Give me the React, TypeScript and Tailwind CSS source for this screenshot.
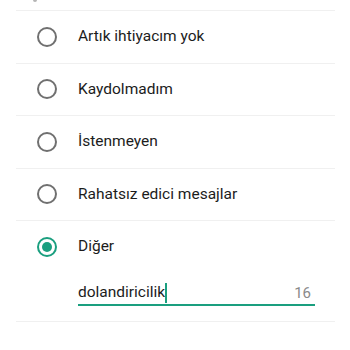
const options = [
  { label: "Artık ihtiyacım yok", checked: false },
  { label: "Kaydolmadım", checked: false },
  { label: "İstenmeyen", checked: false },
  { label: "Rahatsız edici mesajlar", checked: false },
]

function Radio({ checked }: { checked: boolean }) {
  if (checked) {
    return (
      <div className="w-[20px] h-[20px] rounded-full border-2 border-[#1a9f7f] flex items-center justify-center">
        <div className="w-[10px] h-[10px] rounded-full bg-[#1a9f7f]" />
      </div>
    )
  }
  return <div className="w-[20px] h-[20px] rounded-full border-2 border-[#707070]" />
}

export default function App() {
  return (
    <div
      className="w-[350px] h-[350px] bg-white overflow-hidden text-[#1c1c1c]"
      style={{ fontFamily: "Roboto, 'Noto Sans', sans-serif" }}
    >
      <div className="h-[10px] relative">
        <div className="absolute left-[33px] top-0 w-[4px] h-[2px] bg-[#b5b5b5] rounded-b-full" />
      </div>
      <div className="mx-4 w-[319px]">
        {options.map((o) => (
          <div key={o.label} className="border-t border-[#f0f0f0] h-[52.5px] flex items-center">
            <div className="ml-[21px]">
              <Radio checked={o.checked} />
            </div>
            <span className="ml-[21px] text-[15.5px] leading-none">{o.label}</span>
          </div>
        ))}
        <div className="border-t border-[#f0f0f0] border-b h-[102px] flex flex-col">
          <div className="h-[52px] flex items-center">
            <div className="ml-[21px]">
              <Radio checked />
            </div>
            <span className="ml-[21px] text-[15.5px] leading-none">Diğer</span>
          </div>
          <div className="mt-[9px] ml-[62px] w-[237px] flex items-center h-[24px] border-b-2 border-[#1a9f7f]">
            <span className="text-[15.5px] leading-none">dolandiricilik</span>
            <div className="w-[2px] h-[20px] bg-[#1a9f7f]" />
            <span className="ml-auto mr-[4px] text-[15px] leading-none text-[#8a8a8a]">16</span>
          </div>
        </div>
      </div>
    </div>
  )
}
